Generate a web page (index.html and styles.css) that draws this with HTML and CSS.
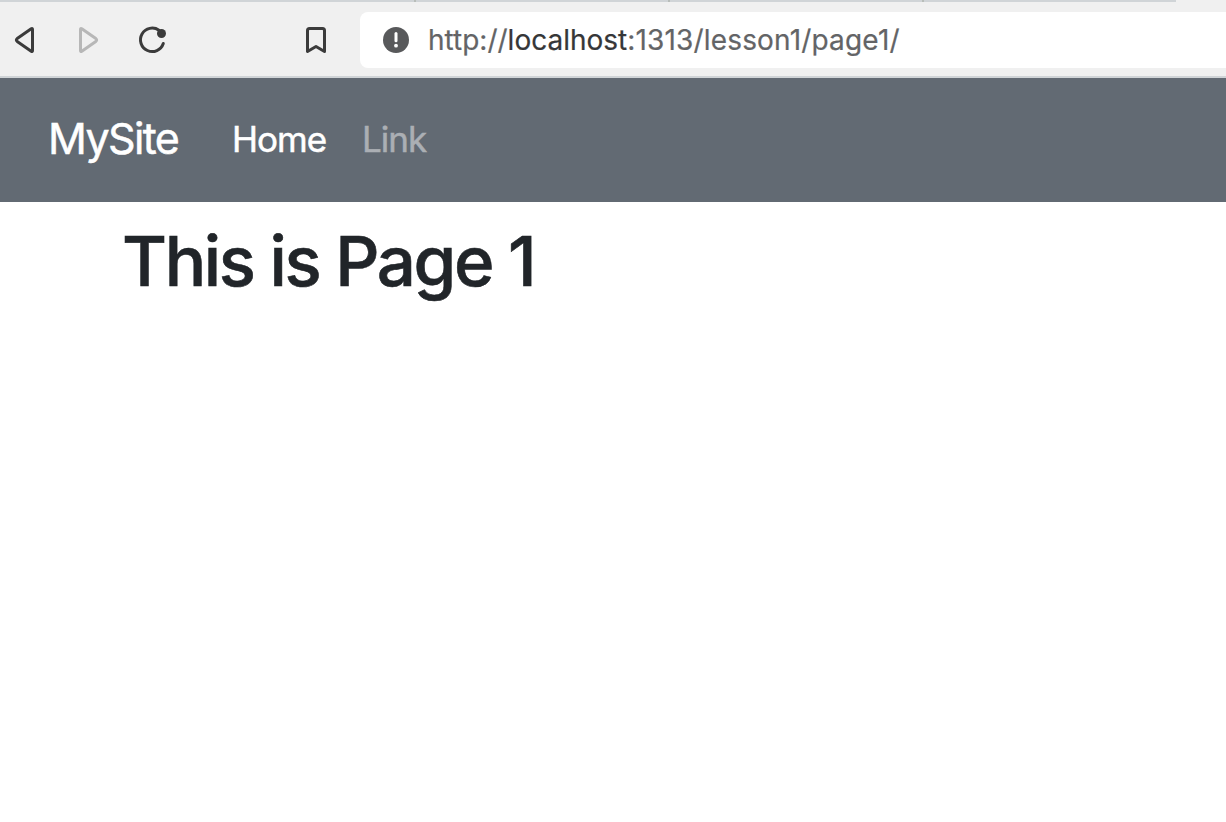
FILE: index.html
```html
<!DOCTYPE html>
<html lang="en">
<head>
<meta charset="utf-8">
<title>MySite</title>
<link rel="stylesheet" href="styles.css">
</head>
<body>
<div class="tabs"><span class="tab tab-first"></span><span class="tab"></span><span class="tab"></span><span class="tab tab-last"></span></div>
<div class="toolbar">
  <svg class="controls" viewBox="0 0 360 74" fill="none" stroke="#3b3b3b" stroke-width="3" stroke-linejoin="round" stroke-linecap="round">
    <path d="M31.2 26.8Q32.5 26 32.5 27.5V48.5Q32.5 50 31.2 49.2L17.2 39.5Q15.500 38 17.200 36.500Z"/>
    <path stroke="#b7b7b7" d="M81.800 26.800Q80.500 26 80.500 27.500V48.500Q80.500 50 81.800 49.200L95.800 39.500Q97.500 38 95.800 36.500Z"/>
    <path d="M159 28.300A11.700 11.700 0 1 0 163.300 41.500"/>
    <circle cx="161.500" cy="31.500" r="4.500" fill="#3b3b3b" stroke="none"/>
    <path d="M307.500 49.500V28.500Q307.500 26.500 309.500 26.500H322.500Q324.500 26.500 324.500 28.500V49.500L316 44.500Z"/>
  </svg>
  <div class="address">
    <svg class="info" viewBox="0 0 26 26"><circle cx="13" cy="13" r="13" fill="#58595b"/><path d="M13 6.500V13.800" stroke="#fff" stroke-width="3" stroke-linecap="round"/><circle cx="13" cy="18.700" r="1.900" fill="#fff"/></svg>
    <span class="url">http://<span class="host">localhost</span><span class="path">:1313/lesson1/page1/</span></span>
  </div>
</div>
<nav class="navbar">
  <span class="brand">MySite</span>
  <span class="link active">Home</span>
  <span class="link">Link</span>
</nav>
<main><h1>This is Page 1</h1></main>
</body>
</html>
```
FILE: styles.css
```css
* { box-sizing: border-box; }
body { margin: 0; background: #fff; font-family: Inter, "Liberation Sans", sans-serif; overflow: hidden; }
.tabs { display: flex; height: 2px; background: #f0f0f0; }
.tab { width: 254px; background: #d0d4d7; border-right: 2px solid #b8bdb9; }
.tab-first { width: 416px; }
.tab-last { width: 252px; border: 0; }
.toolbar { display: flex; align-items: flex-start; height: 76px; background: #f0f0f0; border-bottom: 2px solid #d0d4d7; }
.controls { width: 360px; height: 74px; flex: none; }
.address { display: flex; align-items: center; flex: 1; height: 56px; margin-top: 10px; padding-left: 23px; background: #fff; border-radius: 8px 0 0 8px; }
.info { width: 26px; height: 26px; flex: none; }
.url { margin-left: 19px; font-size: 28px; line-height: 34px; color: #636466; white-space: nowrap; -webkit-text-stroke: 0.2px; }
.host { color: #363738; }
.path { letter-spacing: 0.17px; }
.navbar { display: flex; align-items: flex-start; height: 124px; padding: 0 0 0 48px; background: #626a73; color: #fff; -webkit-text-stroke: 0.5px; }
.brand { width: 184px; padding-top: 32px; font-size: 43px; line-height: 56px; letter-spacing: -1.6px; }
.link { padding-top: 37px; font-size: 35px; line-height: 48px; letter-spacing: -1px; color: #abafb4; }
.active { width: 130px; color: #fff; }
main { padding: 17px 0 0 122px; }
h1 { margin: 0; font-size: 69px; line-height: 84px; font-weight: 500; letter-spacing: -2.4px; word-spacing: 0; color: #212529; white-space: nowrap; -webkit-text-stroke: 0.6px; }
```
